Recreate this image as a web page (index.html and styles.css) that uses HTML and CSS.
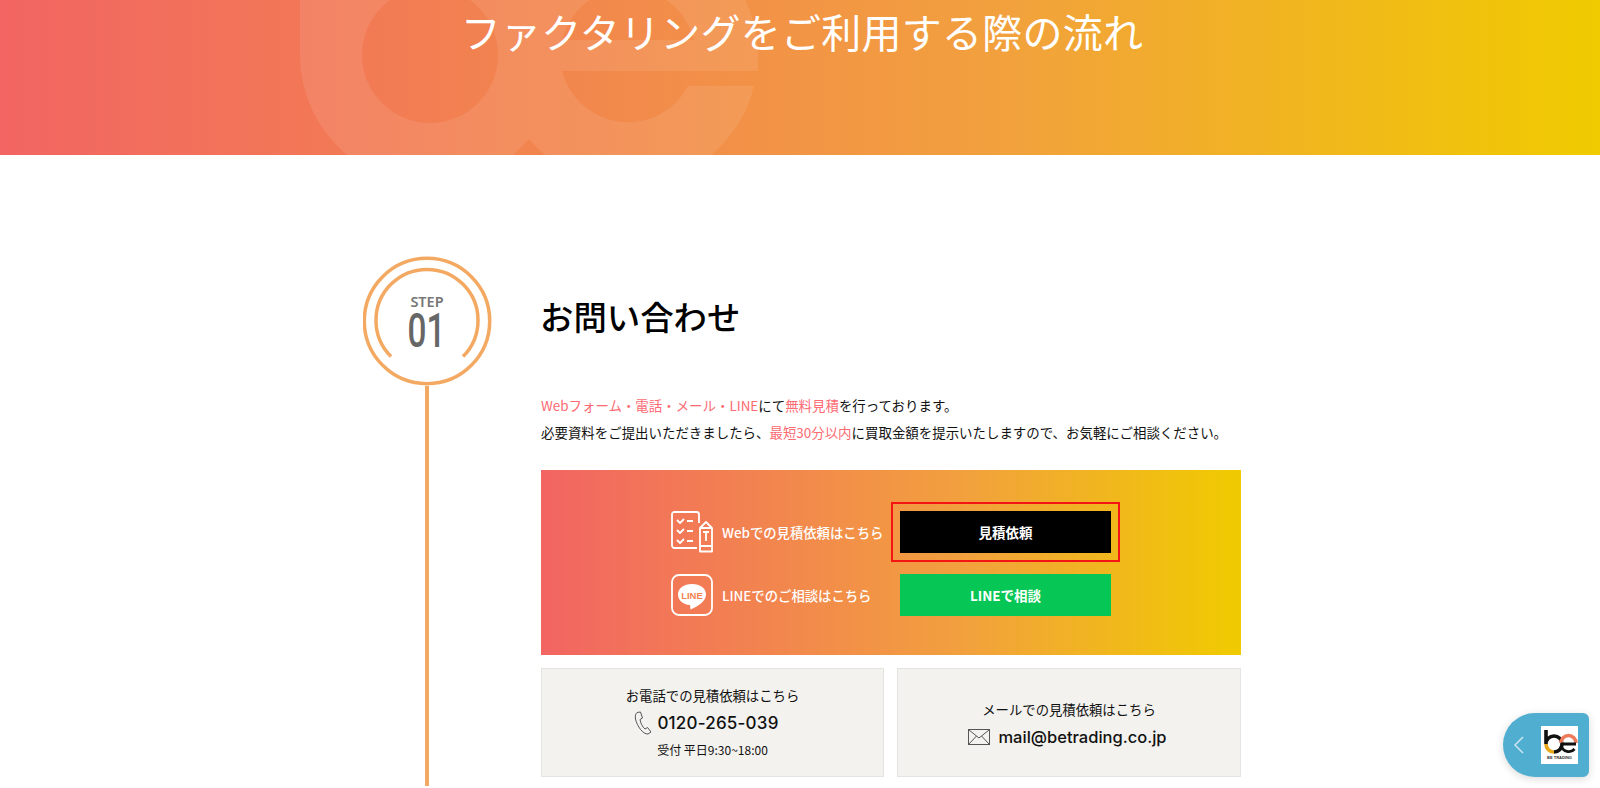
FILE: index.html
```html
<!DOCTYPE html>
<html lang="ja">
<head>
    <meta charset="UTF-8">
    <title>ファクタリングをご利用する際の流れ</title>
    <link rel="stylesheet" href="styles.css">
</head>
<body>
    <section class="hero">
        <svg class="hero-mark" viewBox="0 0 470 155" width="470" height="155">
            <path fill-rule="evenodd" d="M0 -5H443A130 130 0 0 1 458 55V71H262A68 68 0 0 0 388 86H454A130 130 0 0 1 411 155H245A130 130 0 0 1 229 139A130 130 0 0 1 213 155H47A130 130 0 0 1 0 55Z M62 55A68 68 0 1 0 198 55A68 68 0 1 0 62 55Z M262 40H394A68 68 0 0 0 262 40Z" />
        </svg>
        <h1>ファクタリングをご利用する際の流れ</h1>
    </section>

    <main class="flow">
        <div class="step-col">
            <div class="badge">
                <svg class="badge-rings" viewBox="0 0 130 130" width="130" height="130">
                    <circle cx="64" cy="65" r="62.700" />
                    <path d="M28 100.500A51 51 0 1 1 100 100.500" />
                </svg>
                <div class="badge-label">STEP</div>
                <div class="badge-num">01</div>
            </div>
            <div class="step-line"></div>
        </div>

        <div class="step-body">
            <h2>お問い合わせ</h2>
            <p class="lead"><span class="pink">Webフォーム・電話・メール・LINE</span>にて<span class="pink">無料見積</span>を行っております。<br>必要資料をご提出いただきましたら、<span class="pink">最短30分以内</span>に買取金額を提示いたしますので、お気軽にご相談ください。</p>

            <div class="cta">
                <div class="cta-row">
                    <div class="cta-label">
                        <svg class="cta-icon" viewBox="0 0 42 42" width="42" height="42">
                            <path d="M28 12V3.500A2.500 2.500 0 0 0 25.500 1H3.500A2.500 2.500 0 0 0 1 3.500V34.500A2.500 2.500 0 0 0 3.500 37H26" />
                            <path d="M6 9l3 3L13 8M16 10h6M6 19l3 3L13 18M16 20h6M6 29l3 3L13 28M16 30h6" />
                            <path d="M29 40.500V17L35 11L41 17V40.500ZM29 17H41M29 35H41M32 21H38M35 21V30" />
                        </svg>
                        <span>Webでの見積依頼はこちら</span>
                    </div>
                    <div class="cta-focus"><a class="btn btn-black">見積依頼</a></div>
                </div>
                <div class="cta-row">
                    <div class="cta-label">
                        <svg class="cta-icon" viewBox="0 0 42 42" width="42" height="42">
                            <rect x="1" y="1" width="40" height="40" rx="7" />
                            <path class="fill" d="M21 10C12.500 10 7 14.500 7 20.500C7 26.500 12 30.500 19 31L19.500 35.500C25 33 35 28 35 20.500C35 14.500 29.500 10 21 10Z" />
                            <text x="21" y="24.500" class="line-word">LINE</text>
                        </svg>
                        <span>LINEでのご相談はこちら</span>
                    </div>
                    <a class="btn btn-line">LINEで相談</a>
                </div>
            </div>

            <div class="contact-grid">
                <div class="contact-card">
                    <div class="contact-title">お電話での見積依頼はこちら</div>
                    <div class="contact-main contact-tel">
                        <svg viewBox="0 0 18 24" width="18" height="24" class="contact-icon">
                            <path d="M3 1.500L6.500 1L8.500 7L6 8.500C6.500 12 8.500 16 11 18L13.500 16.500L17 21L14 23C9 23.500 3 15 1.500 8C1 5 1.500 3 3 1.500Z" />
                        </svg>
                        <span>0120-265-039</span>
                    </div>
                    <div class="contact-note">受付 平日9:30~18:00</div>
                </div>
                <div class="contact-card contact-card-mail">
                    <div class="contact-title">メールでの見積依頼はこちら</div>
                    <div class="contact-main contact-mail">
                        <svg viewBox="0 0 22 16" width="22" height="16" class="contact-icon">
                            <rect x="0.500" y="0.500" width="21" height="15" />
                            <path d="M1 1L11 9L21 1M1 15L8.500 7M21 15L13.500 7" />
                        </svg>
                        <span>mail@betrading.co.jp</span>
                    </div>
                </div>
            </div>
        </div>
    </main>

    <!-- Floating tab -->
    <div class="float-tab">
        <svg viewBox="0 0 10 18" width="10" height="18" class="float-arrow"><path d="M9 1L1 9L9 17" /></svg>
        <div class="float-logo">
            <svg viewBox="0 0 37 29" width="37" height="29">
                <path d="M5 4V18A8 8 0 0 1 21 18A8 8 0 0 1 13 26" class="logo-b" />
                <path d="M5 18A8 8 0 0 0 13 26" class="logo-y" />
                <path d="M20 17A7.500 7.500 0 0 1 35 17" class="logo-r" />
                <path d="M20 18H35M20.500 20A7.500 7.500 0 0 0 33.500 23" class="logo-e" />
            </svg>
            <div class="float-logo-text">BE TRADING</div>
        </div>
    </div>
</body>
</html>
```
FILE: styles.css
```css
/* Basic styling */
* { box-sizing: border-box; }
html, body { height: 788px; overflow: hidden; }
body { margin: 0; background: #fff; color: #000; font-family: "Noto Sans CJK JP", "Noto Sans", sans-serif; }

/* Hero */
.hero { position: relative; height: 155px; overflow: hidden; background: linear-gradient(90deg, #f26562 0%, #f2a03e 62%, #f0cb00 100%); }
.hero-mark { position: absolute; top: 0; left: 300px; }
.hero-mark path { fill: #fff; opacity: 0.09; }
.hero h1 { position: relative; margin: 0; padding: 4px 0 0 4px; text-align: center; color: #fff; font-size: 40px; font-weight: 400; line-height: 54px; letter-spacing: 0.25px; }

/* Step layout */
.flow { display: flex; width: 880px; margin: 101px 0 0 363px; }
.step-col { width: 178px; display: flex; flex-direction: column; align-items: flex-start; }
.badge { position: relative; width: 130px; height: 130px; }
.badge-rings { position: absolute; top: 0; left: 0; }
.badge-rings circle, .badge-rings path { fill: none; stroke: #f4a962; stroke-width: 3.500; }
.badge-label { position: absolute; top: 38px; left: 0; width: 128px; text-align: center; font-family: "Noto Sans", sans-serif; font-size: 14.500px; font-weight: 600; color: #777; line-height: 14px; }
.badge-num { position: absolute; top: 56px; left: 0; width: 127px; text-align: center; font-family: "Roboto", sans-serif; font-size: 49px; font-weight: 500; color: #666; line-height: 38px; transform: scaleX(0.68); }
.step-line { width: 4px; height: 400px; margin-left: 62px; background: #f4a962; }

.step-body { width: 700px; }
h2 { margin: 38px 0 0 -1px; font-size: 33.400px; font-weight: 500; line-height: 44px; }
.lead { margin: 54px 0 0; font-size: 13.440px; line-height: 27px; color: #111; }
.pink { color: #fc6a72; }

/* CTA box */
.cta { margin-top: 24px; height: 185px; padding-top: 41px; background: linear-gradient(90deg, #f26562 0%, #f2a03e 60%, #f0cb00 100%); }
.cta-row { display: flex; align-items: center; height: 42px; margin-bottom: 21px; padding-left: 130px; }
.cta-label { display: flex; align-items: center; gap: 9px; width: 229px; color: #fff; font-size: 13.350px; font-weight: 500; white-space: nowrap; }
.cta-icon { flex: none; }
.cta-icon path, .cta-icon rect { fill: none; stroke: #fff; stroke-width: 1.800; stroke-linejoin: round; }
.cta-icon .fill { fill: #fff; stroke: none; }
.line-word { fill: #f3834f; font-family: "Liberation Sans", sans-serif; font-size: 9.500px; font-weight: 700; text-anchor: middle; }
.cta-focus { position: relative; }
.cta-focus::after { content: ""; position: absolute; top: -9px; left: -9px; right: -9px; bottom: -9px; border: 2px solid #f51414; }
.btn { display: flex; align-items: center; justify-content: center; width: 211px; height: 42px; color: #fff; font-size: 13.500px; font-weight: 700; }
.btn-black { background: #000; }
.btn-line { background: #06c755; }

/* Contact cards */
.contact-grid { display: grid; grid-template-columns: 343px 344px; gap: 13px; margin-top: 13px; }
.contact-card { display: flex; flex-direction: column; align-items: center; justify-content: center; height: 109px; background: #f3f2ee; border: 1px solid #e4e4e0; color: #111; }
.contact-card-mail { padding-top: 4px; }
.contact-title { font-size: 13.350px; line-height: 20px; }
.contact-main { display: flex; align-items: center; margin-top: 4px; font-family: "Inter", sans-serif; font-weight: 500; line-height: 26px; }
.contact-tel { gap: 5px; margin-right: 12px; font-size: 17px; letter-spacing: 0.200px; }
.contact-mail { gap: 8px; margin-right: 3px; font-size: 16.500px; }
.contact-icon path, .contact-icon rect { fill: none; stroke: #555; stroke-width: 1; }
.contact-note { margin-top: 5px; font-size: 12px; line-height: 18px; }

/* Floating tab */
.float-tab { position: fixed; top: 713px; right: 11px; display: flex; align-items: center; gap: 17px; width: 86px; height: 64px; padding-left: 11px; background: #50aed0; border-radius: 32px 6px 6px 32px; box-shadow: 0 2px 8px rgba(0,0,0,0.15); }
.float-arrow path { fill: none; stroke: #cfe6f0; stroke-width: 1.500; }
.float-logo { display: flex; flex-direction: column; align-items: center; flex: none; width: 37px; height: 38px; background: #fff; }
.logo-b, .logo-e { fill: none; stroke: #111; stroke-width: 3.600; }
.logo-e { stroke-width: 2.800; }
.logo-y { fill: none; stroke: #e8a81a; stroke-width: 3.600; }
.logo-r { fill: none; stroke: #ee7a5a; stroke-width: 3.600; }
.float-logo-text { font-family: "Liberation Sans", sans-serif; font-size: 4px; font-weight: 700; line-height: 6px; white-space: nowrap; color: #333; }
```
